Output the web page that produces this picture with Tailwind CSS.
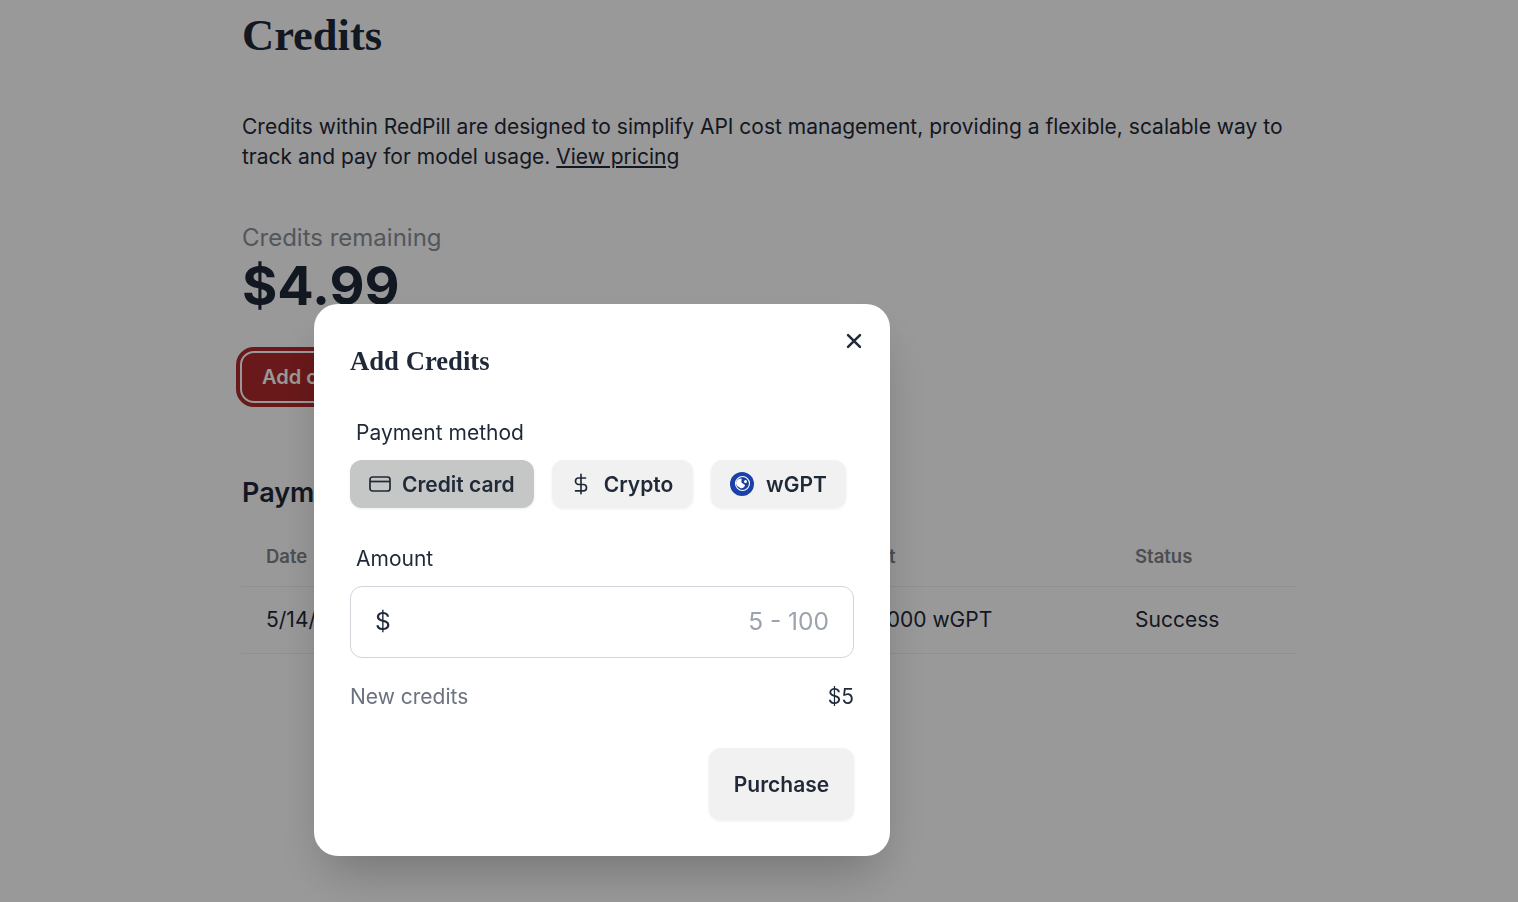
<!DOCTYPE html>
<html lang="en">
<head>
  <meta charset="UTF-8" />
  <title>Credits</title>
  <script src="https://cdn.jsdelivr.net/npm/@tailwindcss/browser@4"></script>
</head>
<body class="bg-white overflow-hidden h-[902px] font-['Inter',sans-serif] text-[#1f2937]">

  <!-- Page -->
  <main class="w-[1056px] ml-[241px] pt-[9px]">
    <h1 class="text-[44.5px] leading-[52px] font-bold text-[#1f2937] font-['Liberation_Serif',serif] pl-px">Credits</h1>
    <p class="mt-[51px] pl-px text-[21px] leading-[30px]">Credits within RedPill are designed to simplify API cost management, providing a flexible, scalable way to track and pay for model usage. <a href="#" class="underline">View pricing</a></p>

    <p class="mt-[50px] pl-px text-[24px] leading-[32px] text-[#8b909a]">Credits remaining</p>
    <p class="mt-[2px] pl-px text-[54px] leading-[60px] font-bold">$4.99</p>

    <div class="mt-[37px] pl-px">
      <button class="h-12 px-5 rounded-xl bg-[#b02a2a] text-white text-[20px] font-semibold ring-[2.5px] ring-white outline-4 outline-offset-[2.5px] outline-[#b02a2a]">Add credits</button>
    </div>

    <h2 class="mt-[74px] pl-px text-[27px] leading-[36px] font-semibold">Payment history</h2>

    <table class="mt-[16px] w-full text-left table-fixed">
      <thead>
        <tr class="border-b border-[#eeeeee] text-[18.5px] font-semibold text-[#7f838b]">
          <th class="pl-[25px] pt-[1px] h-[59px] w-[375px] font-semibold">Date</th>
          <th class="pt-[1px] h-[59px] w-[209px] font-semibold">Price</th>
          <th class="pt-[1px] h-[59px] w-[310px] font-semibold">Amount</th>
          <th class="pt-[1px] h-[59px] font-semibold">Status</th>
        </tr>
      </thead>
      <tbody>
        <tr class="border-b border-[#eeeeee] text-[21px]">
          <td class="pl-[25px] h-[67px]">5/14/2024</td>
          <td class="h-[67px]">$5</td>
          <td class="pl-[3px] h-[67px]">1,000,000 wGPT</td>
          <td class="h-[67px]">Success</td>
        </tr>
      </tbody>
    </table>
  </main>

  <!-- Overlay -->
  <div class="fixed inset-0 bg-black/40 pl-[314px] pt-[304px]">
    <div class="relative w-[576px] h-[552px] bg-white rounded-[24px] shadow-2xl px-9 pt-[39px]">
      <button class="absolute top-[26px] right-[25px] text-[#1f2937]">
        <svg class="w-[22px] h-[22px]" viewBox="0 0 24 24" fill="none" stroke="currentColor" stroke-width="2.7" stroke-linecap="round"><path d="M5.500 5.500l13 13M18.500 5.500l-13 13"/></svg>
      </button>
      <h3 class="text-[26.7px] leading-[36px] font-bold font-['Liberation_Serif',serif]">Add Credits</h3>

      <p class="mt-[39px] pl-1.5 text-[21px] leading-[30px]">Payment method</p>
      <div class="mt-3 flex gap-[18px]">
        <button class="h-12 w-[184px] pl-[18px] flex items-center gap-[10px] rounded-xl bg-[#c5c6c6] text-[21px] font-semibold shadow-[0_1px_3px_rgba(0,0,0,0.08)]">
          <svg class="w-6 h-6" viewBox="0 0 24 24" fill="none" stroke="currentColor" stroke-width="1.7"><rect x="2" y="5" width="20" height="14" rx="2.500"/><path d="M2 9.500h20"/></svg>
          <span class="pt-[2px]">Credit card</span>
        </button>
        <button class="h-12 w-[141px] pr-[2px] flex items-center justify-center gap-3 rounded-xl bg-[#f1f1f1] text-[21px] font-semibold shadow-[0_1px_3px_rgba(0,0,0,0.08)]">
          <svg class="w-[22px] h-[22px]" viewBox="0 0 24 24" fill="none" stroke="currentColor" stroke-width="1.8" stroke-linecap="round"><path d="M12 1.500v21M17 5.500H9.500a3.500 3.500 0 0 0 0 7h5a3.500 3.500 0 0 1 0 7H6"/></svg>
          <span class="pt-[2px]">Crypto</span>
        </button>
        <button class="h-12 w-[135px] flex items-center justify-center gap-3 rounded-xl bg-[#f1f1f1] text-[21px] font-semibold shadow-[0_1px_3px_rgba(0,0,0,0.08)]">
          <svg class="w-6 h-6" viewBox="0 0 24 24"><circle cx="12" cy="12" r="12" fill="#1a41a8"/><circle cx="12.500" cy="11.500" r="7" fill="none" stroke="#fff" stroke-width="1.100"/><path d="M6 11c.5-3 3.500-5 5.500-4.500 .5 1.500-.5 2.500 0 4 1.500 1.500 3 1.500 3.500 3-1 2.500-3 3-4.500 2.500C8 15 6 13 6 11z" fill="#fff"/><circle cx="15.500" cy="9.500" r="1.500" fill="#fff"/></svg>
          <span class="pt-[2px]">wGPT</span>
        </button>
      </div>

      <p class="mt-[36px] pl-1.5 text-[21px] leading-[30px]">Amount</p>
      <div class="mt-3 h-[72px] pb-[2px] flex items-center justify-between px-6 rounded-xl border border-[#d1d5db] text-[24.5px]">
        <span>$</span>
        <span class="text-[#9ca3af]">5 - 100</span>
      </div>

      <div class="mt-6 flex justify-between text-[21px] leading-[30px]">
        <span class="text-[#6b7280]">New credits</span>
        <span>$5</span>
      </div>

      <div class="mt-[36px] flex justify-end">
        <button class="h-[72px] w-[145px] pt-[2px] rounded-xl bg-[#f1f1f1] text-[21px] font-semibold shadow-[0_1px_3px_rgba(0,0,0,0.08)]">Purchase</button>
      </div>
    </div>
  </div>

</body>
</html>
